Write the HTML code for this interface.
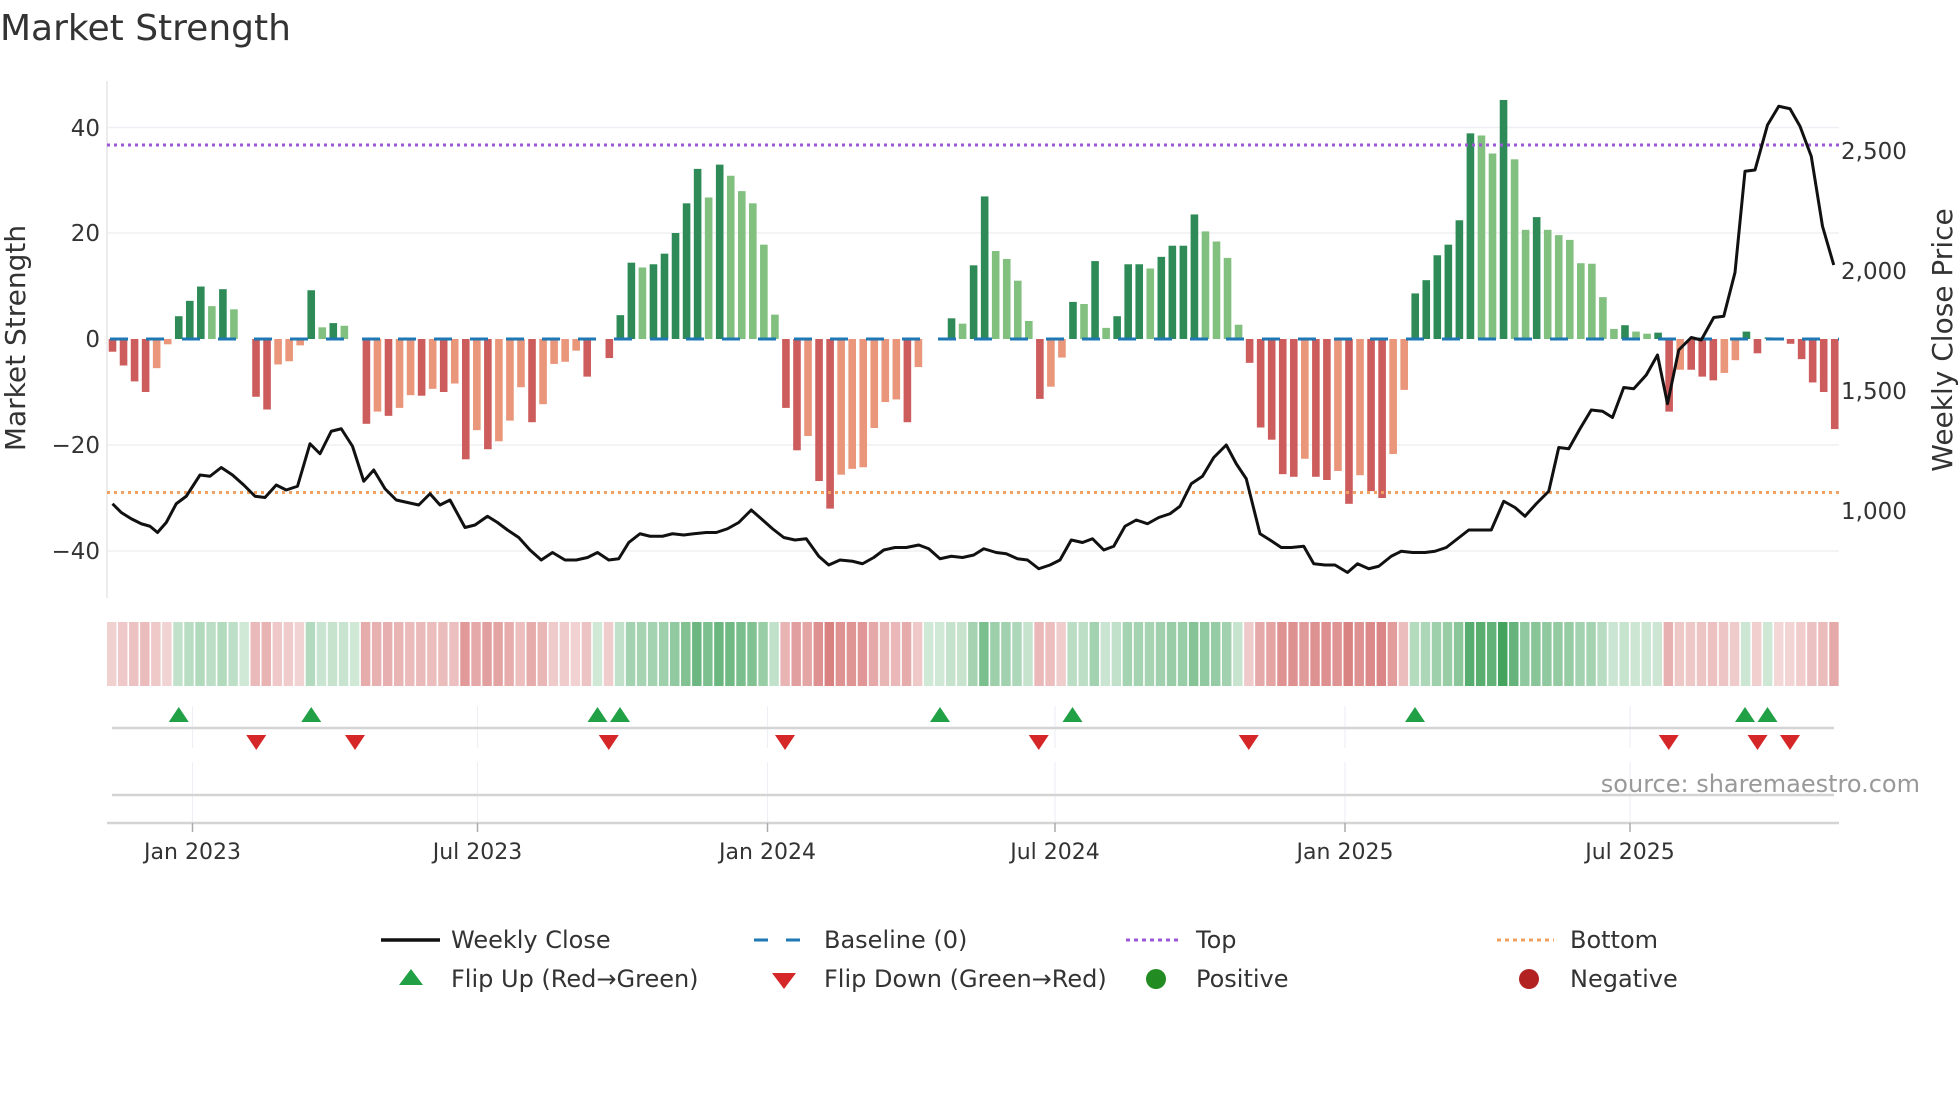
<!DOCTYPE html>
<html><head><meta charset="utf-8"><style>
html,body{margin:0;padding:0;background:#fff;width:1960px;height:1102px;overflow:hidden}
svg text{font-family:"DejaVu Sans","Liberation Sans",sans-serif;fill:#333}
</style></head><body>
<svg id="s" width="1960" height="1102" xmlns="http://www.w3.org/2000/svg">
<text x="0" y="40" font-size="36" fill="#333">Market Strength</text>
<g stroke="#eef0f4" stroke-width="1.5">
<line x1="107" y1="127.5" x2="1839" y2="127.5"/><line x1="107" y1="233" x2="1839" y2="233"/>
<line x1="107" y1="445" x2="1839" y2="445"/><line x1="107" y1="551" x2="1839" y2="551"/>
</g>
<line x1="107" y1="81" x2="107" y2="598" stroke="#e6e6e6" stroke-width="1.5"/>
<g font-size="23" text-anchor="end">
<text x="100" y="136">40</text><text x="100" y="241">20</text><text x="100" y="347">0</text>
<text x="100" y="453">−20</text><text x="100" y="559">−40</text>
</g>
<g font-size="23">
<text x="1841" y="159">2,500</text><text x="1841" y="279">2,000</text>
<text x="1841" y="399">1,500</text><text x="1841" y="519">1,000</text>
</g>
<text transform="translate(25,338) rotate(-90)" font-size="28" text-anchor="middle">Market Strength</text>
<text transform="translate(1952,340) rotate(-90)" font-size="28" text-anchor="middle">Weekly Close Price</text>
<g id="bars"></g>
<line x1="107" y1="339" x2="1839" y2="339" stroke="#1f77b4" stroke-width="3" stroke-dasharray="18 18" stroke-dashoffset="-3"/>
<line x1="107" y1="145" x2="1839" y2="145" stroke="#9b59d6" stroke-width="3" stroke-dasharray="3 4"/>
<line x1="107" y1="492.5" x2="1839" y2="492.5" stroke="#f0a060" stroke-width="3" stroke-dasharray="3 4"/>
<g transform="scale(1.25)"><polyline id="price" fill="none" stroke="#111" stroke-width="2.4" stroke-linejoin="round" points="90,403 97,410 105,415 113,419 120,421 126,426 133,418 141,403 149,397 160,380 168,381 177,374 186,380 195,388 204,397 212,398 221,388 229,392 238,389 248,355 256,363 265,345 273,343 282,357 291,385 299,376 308,391 317,400 326,402 335,404 344,395 352,404 360,400 372,422 380,420 390,413 398,418 406,424 415,430 424,440 433,448 442,442 452,448 461,448 470,446 478,442 487,448 495,447 503,434 512,427 520,429 530,429 538,427 547,428 555,427 565,426 573,426 582,423 591,418 601,408 609,415 618,423 627,430 636,432 645,431 655,445 663,452 672,448 682,449 690,451 699,446 707,440 716,438 725,438 735,436 743,439 752,447 761,445 770,446 779,444 787,439 797,442 805,443 814,447 822,448 831,455 840,452 848,448 857,432 866,434 874,431 883,440 891,437 900,421 909,416 918,419 927,414 936,411 944,405 953,387 962,381 971,366 981,356 989,371 997,383 1008,427 1016,432 1025,438 1033,438 1043,437 1051,451 1060,452 1068,452 1078,458 1086,451 1095,455 1103,453 1113,445 1121,441 1130,442 1140,442 1148,441 1157,438 1166,431 1175,424 1193,424 1203,401 1212,406 1220,413 1229,403 1239,393 1247,358 1255,359 1264,343 1273,328 1282,329 1290,334 1299,310 1307,311 1317,300 1326,284 1334,323 1343,280 1353,270 1361,272 1371,254 1379,253 1388,218 1396,137 1404,136 1414,100 1423,85 1432,87 1440,101 1449,125 1458,181 1467,212"/></g>
<g id="heat"></g>
<g stroke="#eef0f6" stroke-width="1.2">
<line x1="192.5" y1="706" x2="192.5" y2="748"/><line x1="477.5" y1="706" x2="477.5" y2="748"/><line x1="767.5" y1="706" x2="767.5" y2="748"/><line x1="1055" y1="706" x2="1055" y2="748"/><line x1="1345" y1="706" x2="1345" y2="748"/><line x1="1630" y1="706" x2="1630" y2="748"/>
<line x1="192.5" y1="762" x2="192.5" y2="823"/><line x1="477.5" y1="762" x2="477.5" y2="823"/><line x1="767.5" y1="762" x2="767.5" y2="823"/><line x1="1055" y1="762" x2="1055" y2="823"/><line x1="1345" y1="762" x2="1345" y2="823"/><line x1="1630" y1="762" x2="1630" y2="823"/>
</g>
<line x1="112" y1="728" x2="1834" y2="728" stroke="#d4d4d4" stroke-width="2.5"/>
<line x1="112" y1="795" x2="1834" y2="795" stroke="#d4d4d4" stroke-width="2.5"/>
<line x1="107" y1="823" x2="1839" y2="823" stroke="#d4d4d4" stroke-width="2.5"/>
<g stroke="#aaa" stroke-width="1.5">
<line x1="192.5" y1="823" x2="192.5" y2="832"/><line x1="477.5" y1="823" x2="477.5" y2="832"/><line x1="767.5" y1="823" x2="767.5" y2="832"/><line x1="1055" y1="823" x2="1055" y2="832"/><line x1="1345" y1="823" x2="1345" y2="832"/><line x1="1630" y1="823" x2="1630" y2="832"/>
</g>
<g id="marks"></g>
<g font-size="22" text-anchor="middle">
<text x="192.5" y="859">Jan 2023</text><text x="477.5" y="859">Jul 2023</text><text x="767.5" y="859">Jan 2024</text><text x="1055" y="859">Jul 2024</text><text x="1345" y="859">Jan 2025</text><text x="1630" y="859">Jul 2025</text>
</g>
<text x="1920" y="792" font-size="24" text-anchor="end" style="fill:#999">source: sharemaestro.com</text>
<g font-size="24">
<line x1="381" y1="940" x2="440" y2="940" stroke="#111" stroke-width="3.5"/>
<text x="451" y="948">Weekly Close</text>
<line x1="754" y1="940" x2="806" y2="940" stroke="#1f77b4" stroke-width="3" stroke-dasharray="14 18"/>
<text x="824" y="948">Baseline (0)</text>
<line x1="1126" y1="940" x2="1181" y2="940" stroke="#9b59d6" stroke-width="3" stroke-dasharray="4 4"/>
<text x="1196" y="948">Top</text>
<line x1="1497" y1="940" x2="1554" y2="940" stroke="#f0a060" stroke-width="3" stroke-dasharray="4 4"/>
<text x="1570" y="948">Bottom</text>
<polygon points="411,969 399,985 423,985" fill="#22a045"/>
<text x="451" y="987">Flip Up (Red→Green)</text>
<polygon points="784,989 772,973 796,973" fill="#d62728"/>
<text x="824" y="987">Flip Down (Green→Red)</text>
<circle cx="1156" cy="979" r="10" fill="#228b22"/>
<text x="1196" y="987">Positive</text>
<circle cx="1529" cy="979" r="10" fill="#b22222"/>
<text x="1570" y="987">Negative</text>
</g>
</svg>
<script>
var v=[-2.4,-5,-8,-10,-5.5,-1,4.3,7.2,9.9,6.2,9.4,5.6,0,-10.9,-13.3,-4.8,-4.2,-1.2,9.2,2.2,3,2.5,0,-16,-13.7,-14.5,-13,-10.6,-10.7,-9.4,-10,-8.4,-22.7,-17.2,-20.8,-19.3,-15.4,-9.1,-15.7,-12.3,-4.7,-4.3,-2.2,-7.1,0,-3.6,4.5,14.4,13.5,14.1,16.1,20,25.6,32.1,26.7,32.9,30.8,27.9,25.6,17.8,4.6,-13,-21,-18.3,-26.8,-32,-25.6,-24.5,-24.2,-16.8,-11.9,-11.4,-15.7,-5.3,0,0,3.9,2.9,13.9,
26.9,16.6,15.1,11,3.4,-11.3,-9,-3.5,
7,6.6,14.7,2.1,4.3,14.1,14.1,13.3,15.5,17.6,17.6,23.5,20.3,18.4,15.3,2.7,
-4.5,-16.7,-19,-25.5,-26,-22.6,-26,-26.6,-24.9,-31.1,-25.7,-28.7,-30,-21.7,-9.6,
8.6,11.1,15.8,17.8,22.4,38.8,38.4,35,45.1,33.9,20.6,23,20.6,19.6,18.7,14.3,14.2,7.9,1.9,2.6,1.4,1,1.2,
-13.7,-5.8,-5.8,-7.1,-7.8,-6.4,-4,1.4,-2.7,0.3,-0.2,-0.9,-3.8,-8.2,-10,-17];
var NS="http://www.w3.org/2000/svg";
function el(t,a,p){var e=document.createElementNS(NS,t);for(var k in a)e.setAttribute(k,a[k]);document.getElementById(p).appendChild(e);}
var P=11.04,x0=112.5;
for(var i=0;i<v.length;i++){
 var x=x0+i*P,val=v[i],prev=i?v[i-1]:0,c;
 if(val>=0)c=(val>=prev)?"#2e8b57":"#81c07f";else c=(val<=prev)?"#cd5c5c":"#e9967a";
 if(Math.abs(val)>0.15){var h=Math.abs(val)*5.3;el("rect",{x:x-3.8,y:val>0?339-h:339,width:7.6,height:h,fill:c},"bars");}
 var a=0.22+0.65*Math.min(Math.abs(val),45)/45;
 var hc=val>=0?"rgba(40,150,70,"+a+")":"rgba(200,70,70,"+a+")";
 el("rect",{x:x-P/2,y:622,width:P-1.6,height:64,fill:hc},"heat");
}
var up=[143,249,478,496,752,858,1132,1396,1414],dn=[205,284,487,628,831,999,1335,1406,1432];
up.forEach(function(d){var x=d*1.25;el("polygon",{points:(x)+",707 "+(x-10)+",722 "+(x+10)+",722",fill:"#22a045"},"marks");});
dn.forEach(function(d){var x=d*1.25;el("polygon",{points:(x)+",750 "+(x-10)+",735 "+(x+10)+",735",fill:"#d62728"},"marks");});
</script>
</body></html>
